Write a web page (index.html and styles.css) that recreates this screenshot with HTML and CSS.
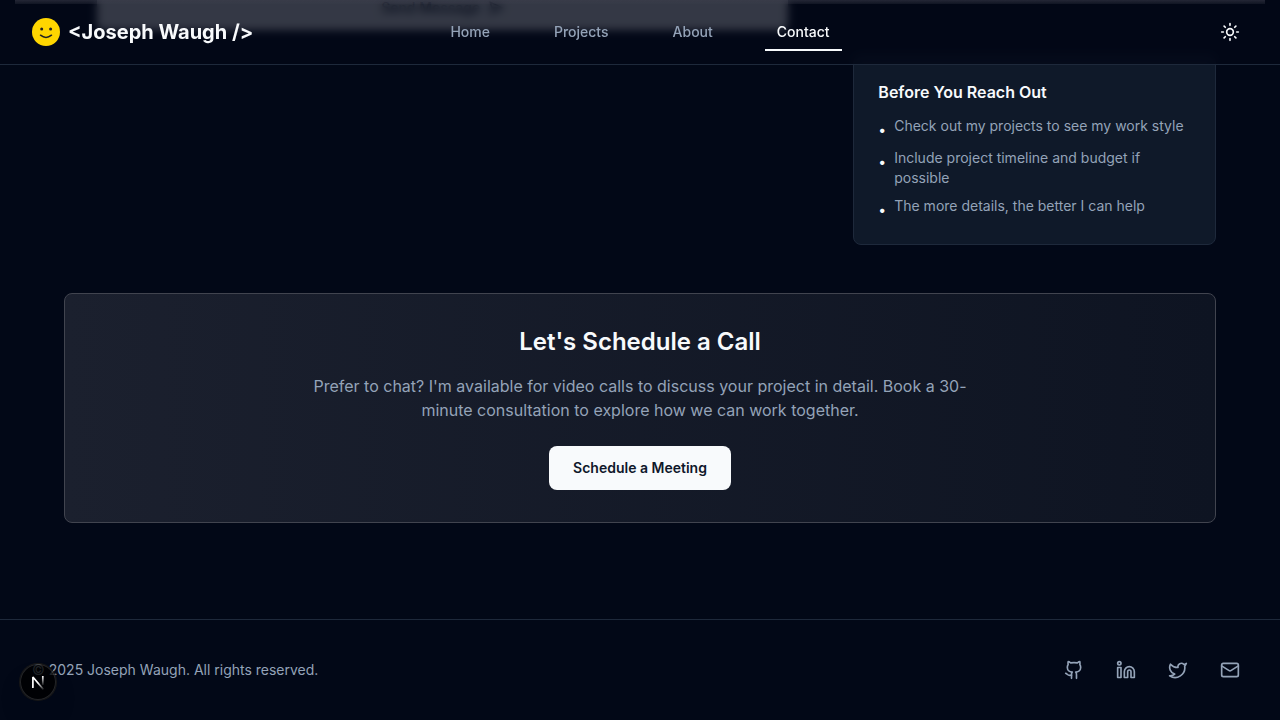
FILE: index.html
```html
<!DOCTYPE html>
<html lang="en">
<head>
<meta charset="utf-8">
<meta name="viewport" content="width=device-width, initial-scale=1">
<title>Contact | Joseph Waugh</title>
<link rel="stylesheet" href="styles.css">
</head>
<body>
<header class="header">
  <a class="brand" href="#">
    <svg class="brand-face" viewBox="0 0 28 28" aria-hidden="true"><circle cx="14" cy="14" r="14" fill="#ffd600"/><circle cx="9.7" cy="11" r="1.5" fill="#222"/><circle cx="18.6" cy="11" r="1.5" fill="#222"/><path d="M8.5 17.2Q14 21.6 19.5 17.2" fill="none" stroke="#222" stroke-width="1.5" stroke-linecap="round"/></svg>
    <span>&lt;Joseph Waugh /&gt;</span>
  </a>
  <nav class="nav" aria-label="Main">
    <a class="nav-link" href="#">Home</a>
    <a class="nav-link" href="#">Projects</a>
    <a class="nav-link" href="#">About</a>
    <a class="nav-link nav-link-active" href="#" aria-current="page">Contact</a>
  </nav>
  <button class="theme" type="button" aria-label="Toggle theme">
    <svg class="icon" viewBox="0 0 24 24"><circle cx="12" cy="12" r="4"/><path d="M12 2v2M12 20v2M4.93 4.93l1.41 1.41M17.66 17.66l1.41 1.41M2 12h2M20 12h2M6.34 17.66l-1.41 1.41M19.07 4.93l-1.41 1.41"/></svg>
  </button>
</header>
<main class="main">
  <section class="columns">
    <form class="form">
      <button class="send" type="button">Send Message
        <svg class="icon icon-small" viewBox="0 0 24 24"><path d="m3 3 3 9-3 9 19-9ZM6 12h16"/></svg>
      </button>
    </form>
    <aside class="tips">
      <h2 class="tips-title">Before You Reach Out</h2>
      <ul class="tips-list">
        <li class="tip">Check out my projects to see my work style</li>
        <li class="tip">Include project timeline and budget if possible</li>
        <li class="tip">The more details, the better I can help</li>
      </ul>
    </aside>
  </section>
  <section class="cta">
    <h2 class="cta-title">Let's Schedule a Call</h2>
    <p class="cta-text">Prefer to chat? I'm available for video calls to discuss your project in detail. Book a 30-minute consultation to explore how we can work together.</p>
    <button class="cta-button" type="button">Schedule a Meeting</button>
  </section>
</main>
<footer class="footer">
  <p class="copyright">© 2025 Joseph Waugh. All rights reserved.</p>
  <div class="social">
    <a class="social-link" href="#" aria-label="GitHub"><svg class="icon" viewBox="0 0 24 24"><path d="M15 22v-4a4.8 4.8 0 0 0-1-3.5c3 0 6-2 6-5.5.08-1.25-.27-2.48-1-3.5.28-1.15.28-2.35 0-3.5 0 0-1 0-3 1.5-2.64-.5-5.36-.5-8 0C6 2 5 2 5 2c-.3 1.15-.3 2.35 0 3.5A5.403 5.403 0 0 0 4 9c0 3.5 3 5.5 6 5.5-.39.49-.68 1.05-.85 1.65-.17.6-.22 1.23-.15 1.85v4"/><path d="M9 18c-4.51 2-5-2-7-2"/></svg></a>
    <a class="social-link" href="#" aria-label="LinkedIn"><svg class="icon" viewBox="0 0 24 24"><path d="M16 8a6 6 0 0 1 6 6v7h-4v-7a2 2 0 0 0-2-2 2 2 0 0 0-2 2v7h-4v-7a6 6 0 0 1 6-6z"/><rect width="4" height="12" x="2" y="9"/><circle cx="4" cy="4" r="2"/></svg></a>
    <a class="social-link" href="#" aria-label="Twitter"><svg class="icon" viewBox="0 0 24 24"><path d="M22 4s-.7 2.1-2 3.4c1.6 10-9.4 17.3-18 11.6 2.2.1 4.4-.6 6-2C3 15.5.5 9.6 3 5c2.2 2.6 5.6 4.1 9 4-.9-4.2 4-6.6 7-3.8 1.1 0 3-1.2 3-1.2z"/></svg></a>
    <a class="social-link" href="#" aria-label="Email"><svg class="icon" viewBox="0 0 24 24"><rect width="20" height="16" x="2" y="4" rx="2"/><path d="m22 7-8.97 5.7a1.94 1.94 0 0 1-2.06 0L2 7"/></svg></a>
  </div>
</footer>
<button class="devtools" type="button" aria-label="Open developer tools">
  <svg class="devtools-mark" viewBox="0 0 36 36" fill="none"><path d="M12.9 24V13L23.5 25.5" stroke="url(#diag)" stroke-width="1.7" stroke-linejoin="bevel"/><path d="M22.8 12v9" stroke="url(#stem)" stroke-width="1.7"/><defs><linearGradient id="diag" gradientUnits="userSpaceOnUse" x1="18" y1="19" x2="24" y2="26"><stop stop-color="#fff"/><stop offset="1" stop-color="#fff" stop-opacity="0"/></linearGradient><linearGradient id="stem" gradientUnits="userSpaceOnUse" x1="22" y1="12" x2="22" y2="22"><stop stop-color="#fff"/><stop offset="1" stop-color="#fff" stop-opacity="0"/></linearGradient></defs></svg>
</button>
</body>
</html>
```
FILE: styles.css
```css
:root {
  --background: #020817;
  --foreground: #f8fafc;
  --muted: #94a3b8;
  --border: #1e293b;
}
* { box-sizing: border-box; }
body {
  margin: 0;
  background: var(--background);
  color: var(--foreground);
  font: 400 16px/24px Inter, "Noto Sans", sans-serif;
}
h2, p, ul { margin: 0; }
a { color: inherit; text-decoration: none; }
button { font: inherit; cursor: pointer; border: 0; }
.icon {
  width: 20px;
  height: 20px;
  display: block;
  fill: none;
  stroke: currentColor;
  stroke-width: 2;
  stroke-linecap: round;
  stroke-linejoin: round;
}
.icon-small { width: 16px; height: 16px; }

.header {
  position: fixed;
  inset: 0 0 auto;
  z-index: 10;
  display: grid;
  grid-template-columns: 1fr auto 1fr;
  align-items: center;
  height: 65px;
  padding: 0 32px;
  border-bottom: 1px solid var(--border);
  background: rgb(2 8 23 / 80%);
  backdrop-filter: blur(4px);
}
/* soft sheen along the top edge */
.header::before {
  content: "";
  position: absolute;
  z-index: -1;
  inset: 0 15px auto;
  height: 4px;
  background: linear-gradient(rgb(58 60 74 / 60%), rgb(58 60 74 / 25%));
}
.brand {
  display: flex;
  align-items: center;
  gap: 8px;
  font-size: 20px;
  line-height: 28px;
  font-weight: 700;
}
.brand-face { width: 28px; height: 28px; }
.nav { display: flex; gap: 40px; }
.nav-link {
  position: relative;
  padding: 8px 12px;
  color: var(--muted);
  font-size: 14px;
  line-height: 20px;
  font-weight: 500;
}
.nav-link-active { color: var(--foreground); }
.nav-link-active::after {
  content: "";
  position: absolute;
  inset: auto 0 -1px;
  height: 2px;
  background: var(--foreground);
}
.theme {
  justify-self: end;
  padding: 8px;
  color: var(--foreground);
  background: none;
}

.main { max-width: 1280px; margin: 0 auto; padding: 0 64px 96px; }
.columns { display: grid; grid-template-columns: repeat(3, 1fr); gap: 32px; }
.form { grid-column: span 2; padding: 0 33px; }
.send {
  display: flex;
  align-items: center;
  justify-content: center;
  gap: 8px;
  width: 100%;
  height: 44px;
  margin-top: -14px;
  border-radius: 6px;
  background: var(--foreground);
  color: #0f172a;
  font-size: 14px;
  font-weight: 500;
}
.tips {
  margin-top: 55px;
  padding: 24px;
  border: 1px solid var(--border);
  border-radius: 8px;
  background: #0f1929;
}
.tips-title { font-size: 16px; font-weight: 600; margin-bottom: 12px; }
.tips-list {
  display: grid;
  gap: 8px;
  padding: 0;
  list-style: none;
  color: var(--muted);
  font-size: 14px;
  line-height: 20px;
}
.tip { display: flex; gap: 8px; }
.tip::before {
  content: "•";
  color: var(--foreground);
  margin-top: 4px;
}
.cta {
  margin-top: 48px;
  padding: 32px;
  border: 1px solid #41444f;
  border-radius: 8px;
  background: linear-gradient(to right, #1b202e, #0e1422);
  text-align: center;
}
.cta-title { font-size: 24px; line-height: 32px; font-weight: 600; margin-bottom: 16px; }
.cta-text { max-width: 672px; margin: 0 auto 24px; color: var(--muted); }
.cta-button {
  padding: 12px 24px;
  border-radius: 8px;
  background: var(--foreground);
  color: #0f172a;
  font-size: 14px;
  line-height: 20px;
  font-weight: 600;
}
.footer {
  display: flex;
  align-items: center;
  justify-content: space-between;
  padding: 32px;
  border-top: 1px solid var(--border);
  color: var(--muted);
}
.copyright { font-size: 14px; line-height: 20px; }
.social { display: flex; gap: 16px; }
.social-link { padding: 8px; }
.devtools {
  position: fixed;
  left: 20px;
  bottom: 20px;
  width: 36px;
  height: 36px;
  padding: 0;
  border-radius: 50%;
  background: rgb(0 0 0 / 80%);
  box-shadow: 0 0 0 1px #171717, inset 0 0 0 1px rgb(255 255 255 / 14%), 0 16px 32px -8px rgb(0 0 0 / 24%);
}
.devtools-mark { display: block; width: 36px; height: 36px; }
```
